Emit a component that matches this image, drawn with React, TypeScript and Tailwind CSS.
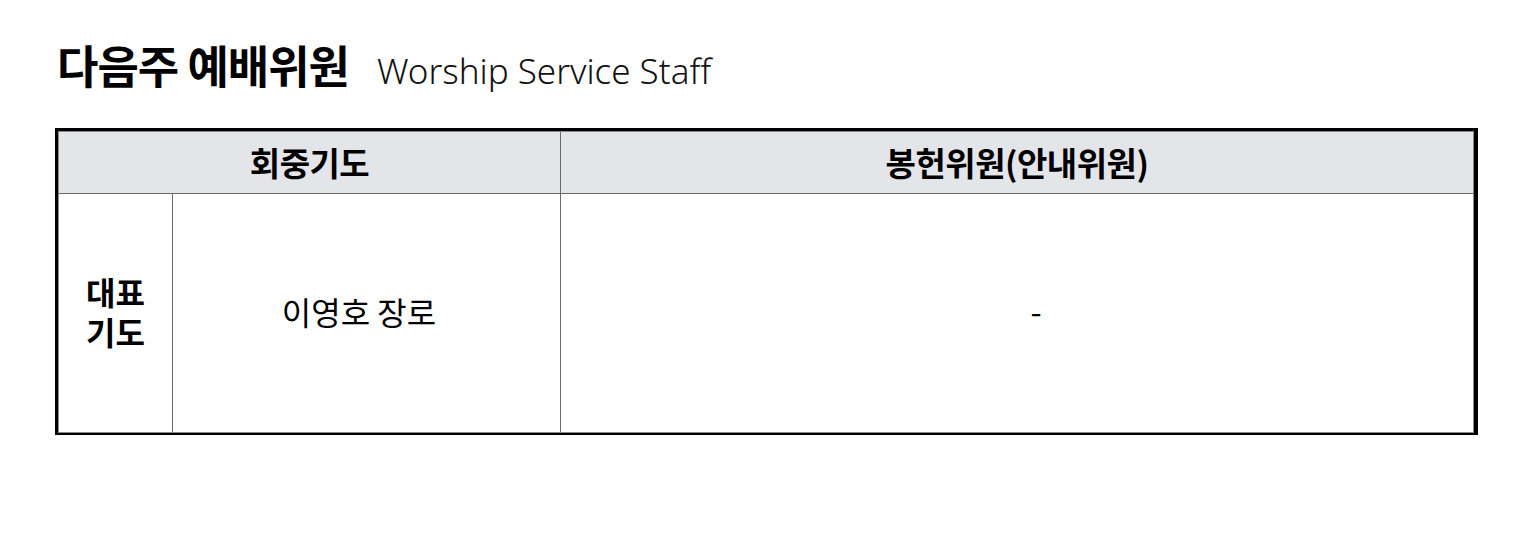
import React from "react";

const kr = { fontFamily: '"Noto Sans CJK KR", "Noto Sans", sans-serif' };

export default function App() {
  return (
    <div className="w-[1538px] h-[543px] bg-white text-black" style={kr}>
      <div className="pl-[57px] pt-[37px] flex items-baseline h-[93px]">
        <h1 className="text-[45px] font-bold leading-[56px] tracking-[-1px]">다음주 예배위원</h1>
        <span
          className="ml-[28px] text-[35px] font-light leading-[56px] text-[#111]"
          style={{ fontFamily: '"Noto Sans", sans-serif' }}
        >
          Worship Service Staff
        </span>
      </div>
      <div className="ml-[55px] mt-[35px] w-[1423px] border-l-[3px] border-t-[3px] border-r-[4px] border-b-[2px] border-black">
        <div className="border border-[#8a8a8a] grid grid-cols-[113px_388px_1fr]">
          <div className="col-span-2 h-[62px] bg-[#e4e5e9] border-b border-[#6a6a6a] flex items-center justify-center text-[33px] font-bold tracking-[-0.5px]">
            회중기도
          </div>
          <div className="h-[62px] bg-[#e4e5e9] border-b border-l border-[#6a6a6a] flex items-center justify-center text-[33px] font-bold tracking-[-0.5px]">
            봉헌위원(안내위원)
          </div>
          <div className="h-[238px] flex flex-col items-center justify-center gap-[2px] pb-[4px] text-[32px] font-bold leading-[38px]">
            <div>대표</div>
            <div>기도</div>
          </div>
          <div className="h-[238px] border-l border-[#6a6a6a] flex items-center justify-center pr-[15px] pb-[4px] text-[32px]">
            이영호 장로
          </div>
          <div className="h-[238px] border-l border-[#6a6a6a] flex items-center justify-center pl-[38px] pb-[6px] text-[32px]">
            -
          </div>
        </div>
      </div>
    </div>
  );
}
